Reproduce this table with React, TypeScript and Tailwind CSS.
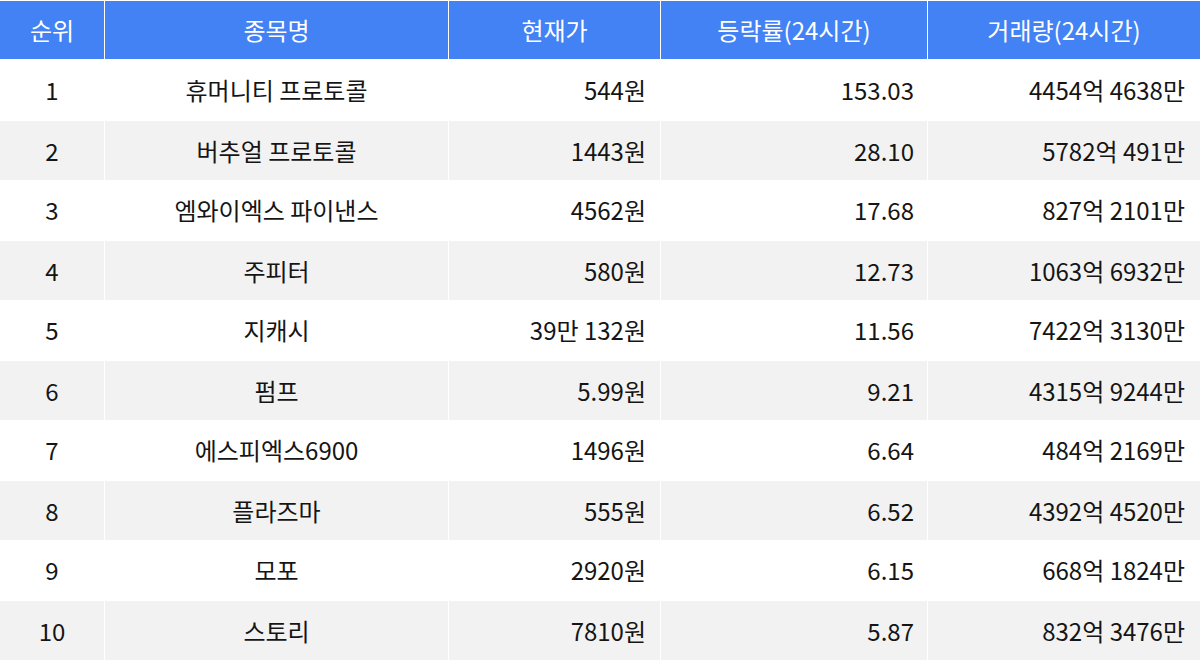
import React from 'react';

const rows = [
  ['1', '휴머니티 프로토콜', '544원', '153.03', '4454억 4638만'],
  ['2', '버추얼 프로토콜', '1443원', '28.10', '5782억 491만'],
  ['3', '엠와이엑스 파이낸스', '4562원', '17.68', '827억 2101만'],
  ['4', '주피터', '580원', '12.73', '1063억 6932만'],
  ['5', '지캐시', '39만 132원', '11.56', '7422억 3130만'],
  ['6', '펌프', '5.99원', '9.21', '4315억 9244만'],
  ['7', '에스피엑스6900', '1496원', '6.64', '484억 2169만'],
  ['8', '플라즈마', '555원', '6.52', '4392억 4520만'],
  ['9', '모포', '2920원', '6.15', '668억 1824만'],
  ['10', '스토리', '7810원', '5.87', '832억 3476만'],
];

const cols = 'grid grid-cols-[104px_344px_212px_267px_273px]';

const App = () => {
  return (
    <div
      className="w-[1200px] h-[661px] bg-white text-[24px] text-[#151515]"
      style={{ fontFamily: '"Noto Sans CJK KR", "Noto Sans", sans-serif' }}
    >
      <div className={`${cols} h-[60px] bg-[#4282f5] text-white border-t border-b border-white`}>
        <div className="flex items-center justify-center">순위</div>
        <div className="flex items-center justify-center border-l border-white">종목명</div>
        <div className="flex items-center justify-center border-l border-white">현재가</div>
        <div className="flex items-center justify-center border-l border-white">등락률(24시간)</div>
        <div className="flex items-center justify-center border-l border-white">거래량(24시간)</div>
      </div>

      {rows.map((r, i) => (
        <div
          key={r[0]}
          className={`${cols} h-[60px] ${i % 2 === 1 ? 'bg-[#f2f2f2] border-t border-white' : 'bg-white'}`}
        >
          <div className="flex items-center justify-center">{r[0]}</div>
          <div className="flex items-center justify-center border-l border-white">{r[1]}</div>
          <div className="flex items-center justify-end pr-[14px] border-l border-white">{r[2]}</div>
          <div className="flex items-center justify-end pr-[13px] border-l border-white">{r[3]}</div>
          <div className="flex items-center justify-end pr-[15px] border-l border-white">{r[4]}</div>
        </div>
      ))}
    </div>
  );
};

export default App;
